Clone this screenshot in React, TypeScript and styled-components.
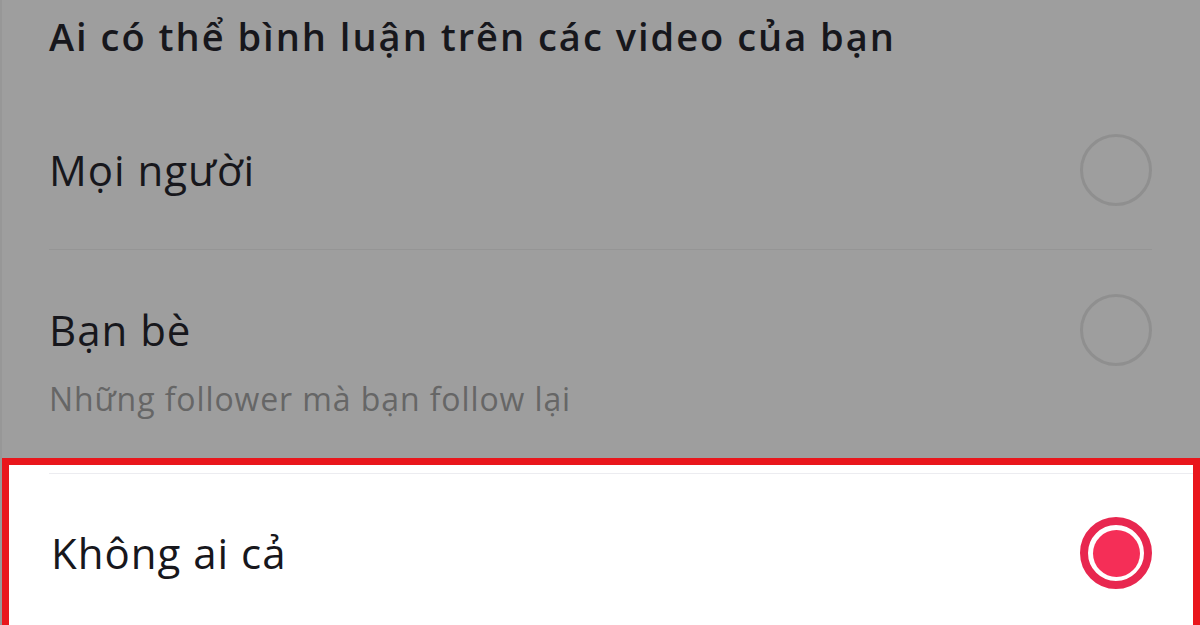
import React from "react";
import styled, { createGlobalStyle } from "styled-components";

const GlobalStyle = createGlobalStyle`
  html, body {
    margin: 0;
    padding: 0;
    background: #9e9e9e;
  }
  body {
    font-family: "Open Sans", "Noto Sans", sans-serif;
  }
`;

const Screen = styled.div`
  width: 1200px;
  height: 625px;
  overflow: hidden;
  background: #9e9e9e;
  display: flex;
  flex-direction: column;
  box-sizing: border-box;
  border-left: 2px solid #979797;
  & > * {
    flex-shrink: 0;
  }
`;

const Heading = styled.h2`
  margin: 0;
  padding: 13px 0 0 47px;
  height: 90px;
  box-sizing: border-box;
  font-size: 38px;
  line-height: 46px;
  font-weight: 600;
  letter-spacing: 2px;
  color: #17171c;
`;

const List = styled.div`
  padding: 0 48px 0 47px;
`;

const Option = styled.div<{ $divider?: boolean; $height: number; $padTop?: number }>`
  display: grid;
  grid-template-columns: 1fr auto;
  align-items: ${(p) => (p.$padTop ? "start" : "center")};
  padding-top: ${(p) => p.$padTop || 0}px;
  height: ${(p) => p.$height}px;
  box-sizing: border-box;
  border-bottom: ${(p) => (p.$divider ? "1px solid #959595" : "none")};
`;

const Label = styled.div`
  font-size: 42px;
  line-height: 50px;
  letter-spacing: 1px;
  color: #17171c;
`;

const Hint = styled.div`
  font-size: 32px;
  line-height: 40px;
  letter-spacing: 0.9px;
  color: #666;
  margin-top: 24px;
`;

const TextCol = styled.div`
  display: flex;
  flex-direction: column;
`;

const Radio = styled.div<{ $checked?: boolean }>`
  width: 72px;
  height: 72px;
  box-sizing: border-box;
  border-radius: 50%;
  border: ${(p) => (p.$checked ? "8px solid #e8274f" : "3px solid #8f8f8f")};
  display: flex;
  align-items: center;
  justify-content: center;
`;

const Dot = styled.div`
  width: 47px;
  height: 47px;
  border-radius: 50%;
  background: #f52e57;
`;

const Highlight = styled.div`
  flex: 1 0 auto;
  background: #fff;
  border: 7px solid #e9161c;
  border-bottom: none;
`;

const FaintLine = styled.div`
  height: 1px;
  margin: 8px 0 0 40px;
  background: #ececf0;
`;

const HighlightRow = styled.div`
  display: flex;
  align-items: center;
  justify-content: space-between;
  padding: 0 41px 0 42px;
  height: 158px;
`;

export default function App() {
  return (
    <>
      <GlobalStyle />
      <Screen>
        <Heading>Ai có thể bình luận trên các video của bạn</Heading>
        <List>
          <Option $divider $height={160}>
            <Label>Mọi người</Label>
            <Radio />
          </Option>
          <Option $height={208} $padTop={44}>
            <TextCol>
              <Label style={{ marginTop: 11 }}>Bạn bè</Label>
              <Hint>Những follower mà bạn follow lại</Hint>
            </TextCol>
            <Radio />
          </Option>
        </List>
        <Highlight>
          <FaintLine />
          <HighlightRow>
            <Label>Không ai cả</Label>
            <Radio $checked>
              <Dot />
            </Radio>
          </HighlightRow>
        </Highlight>
      </Screen>
    </>
  );
}
